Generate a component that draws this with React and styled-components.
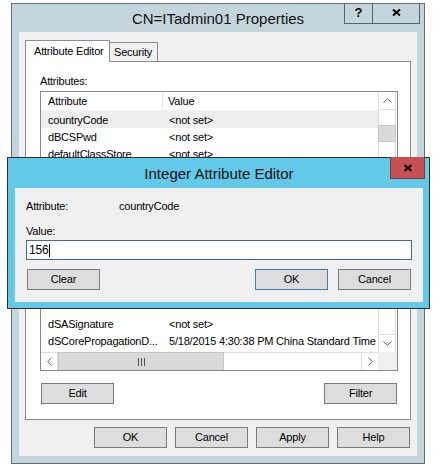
import React from 'react';
import styled, { createGlobalStyle } from 'styled-components';

// rows 3..11 sit under the Integer Attribute Editor and are not visible
const rows = [
  { name: 'countryCode', value: '<not set>', selected: true },
  { name: 'dBCSPwd', value: '<not set>' },
  { name: 'defaultClassStore', value: '<not set>' },
  ...Array.from({ length: 9 }, () => ({ name: '', value: '' })),
  { name: 'dSASignature', value: '<not set>' },
  { name: 'dSCorePropagationD...', value: '5/18/2015 4:30:38 PM China Standard Time' },
];

const App = () => {
  return (
    <>
      <GlobalStyle />
      <Desktop>
        <Window>
          <TitleBar>CN=ITadmin01 Properties</TitleBar>
          <CaptionButtons>
            <CaptionButton $w={29}>?</CaptionButton>
            <CaptionButton $w={48}>
              <svg width="9" height="7" viewBox="0 0 9 7">
                <path d="M1 0.5 L8 6.5 M8 0.5 L1 6.5" stroke="#000" strokeWidth="2" />
              </svg>
            </CaptionButton>
          </CaptionButtons>

          <Client>
            <TabStrip>
              <Tab $active $w={85} $pad={8}>Attribute Editor</Tab>
              <Tab $w={48} $pad={4}>Security</Tab>
            </TabStrip>

            <TabPanel>
              <Label>Attributes:</Label>
              <ListBox>
                <ListView>
                  <HeaderRow>
                    <HeaderCell $first>Attribute</HeaderCell>
                    <HeaderCell>Value</HeaderCell>
                  </HeaderRow>
                  {rows.map((r, i) => (
                    <Row key={i} $selected={r.selected}>
                      <Cell $first>{r.name}</Cell>
                      <Cell>{r.value}</Cell>
                    </Row>
                  ))}
                </ListView>

                <VScroll>
                  <ArrowBox $edge="bottom">
                    <svg width="9" height="5" viewBox="0 0 9 5">
                      <path d="M0.5 4.5 L4.5 0.8 L8.5 4.5" fill="none" stroke="#606060" />
                    </svg>
                  </ArrowBox>
                  <VThumb />
                  <Spacer />
                  <ArrowBox $edge="top">
                    <svg width="9" height="5" viewBox="0 0 9 5">
                      <path d="M0.5 0.5 L4.5 4.2 L8.5 0.5" fill="none" stroke="#606060" />
                    </svg>
                  </ArrowBox>
                </VScroll>

                <HScroll>
                  <HArrow $edge="right">
                    <svg width="5" height="9" viewBox="0 0 5 9">
                      <path d="M4.5 0.5 L0.8 4.5 L4.5 8.5" fill="none" stroke="#606060" />
                    </svg>
                  </HArrow>
                  <HThumb>
                    <svg width="9" height="8" viewBox="0 0 9 8">
                      <path d="M1.5 0 V8 M4.5 0 V8 M7.5 0 V8" stroke="#505050" />
                    </svg>
                  </HThumb>
                  <Spacer />
                  <HArrow $edge="left">
                    <svg width="5" height="9" viewBox="0 0 5 9">
                      <path d="M0.5 0.5 L4.2 4.5 L0.5 8.5" fill="none" stroke="#606060" />
                    </svg>
                  </HArrow>
                </HScroll>
                <Corner />
              </ListBox>

              <PanelButtons>
                <Button>Edit</Button>
                <Button>Filter</Button>
              </PanelButtons>
            </TabPanel>

            <FooterButtons>
              <Button>OK</Button>
              <Button>Cancel</Button>
              <Button>Apply</Button>
              <Button>Help</Button>
            </FooterButtons>
          </Client>
        </Window>

        <Dialog>
          <DialogTitle>Integer Attribute Editor</DialogTitle>
          <CloseButton>
            <svg width="10" height="8" viewBox="0 0 10 8">
              <path d="M1.5 1 L8.5 7 M8.5 1 L1.5 7" stroke="#000" strokeWidth="2.2" />
            </svg>
          </CloseButton>
          <DialogClient>
            <InfoRow>
              <span>Attribute:</span>
              <span>countryCode</span>
            </InfoRow>
            <ValueLabel>Value:</ValueLabel>
            <Input>
              156
              <Caret />
            </Input>
            <DialogButtons>
              <Button>Clear</Button>
              <Spacer />
              <Button $default>OK</Button>
              <Button>Cancel</Button>
            </DialogButtons>
          </DialogClient>
        </Dialog>
      </Desktop>
    </>
  );
};

export default App;

const GlobalStyle = createGlobalStyle`
  html, body {
    margin: 0;
    padding: 0;
    background: #ffffff;
  }
  body {
    font-family: "Liberation Sans", Arial, sans-serif;
    font-size: 11px;
    letter-spacing: -0.2px;
    color: #000;
  }
  * {
    box-sizing: border-box;
  }
`;

const Desktop = styled.div`
  position: relative;
  width: 441px;
  height: 473px;
  padding: 3px 0 0 11px;
  overflow: hidden;
`;

const Window = styled.div`
  position: relative;
  width: 414px;
  height: 461px;
  border: 1px solid #646f78;
  background: #c4d5dc;
  display: flex;
  flex-direction: column;
  padding: 0 7px 7px 7px;
`;

const TitleBar = styled.div`
  height: 28px;
  display: flex;
  align-items: center;
  justify-content: center;
  padding-top: 1px;
  font-size: 15px;
  letter-spacing: 0;
  color: #111;
`;

const CaptionButtons = styled.div`
  position: absolute;
  top: -1px;
  right: 4px;
  display: flex;
`;

const CaptionButton = styled.div`
  width: ${(p) => p.$w}px;
  height: 21px;
  border: 1px solid #59636b;
  border-top: none;
  display: flex;
  align-items: center;
  justify-content: center;
  font-size: 13px;
  font-weight: bold;
  letter-spacing: 0;
  padding-bottom: 2px;

  & + & {
    margin-left: -1px;
  }
`;

const Client = styled.div`
  flex: 1;
  background: #f0f0f0;
  padding: 8px 7px 8px 6px;
  display: flex;
  flex-direction: column;
`;

const TabStrip = styled.div`
  position: relative;
  z-index: 1;
  height: 22px;
  margin-bottom: -1px;
  display: flex;
  align-items: flex-end;
`;

const Tab = styled.div`
  width: ${(p) => p.$w}px;
  height: ${(p) => (p.$active ? 22 : 20)}px;
  padding-left: ${(p) => p.$pad}px;
  border: 1px solid #898c95;
  border-bottom: ${(p) => (p.$active ? 'none' : '1px solid #898c95')};
  border-left: ${(p) => (p.$active ? '1px solid #898c95' : 'none')};
  background: ${(p) => (p.$active ? '#ffffff' : '#f0f0f0')};
  display: flex;
  align-items: center;
  padding-bottom: 1px;
`;

const TabPanel = styled.div`
  width: 386px;
  height: 359px;
  border: 1px solid #898c95;
  background: #ffffff;
  padding: 12px 12px 15px 14px;
  display: flex;
  flex-direction: column;
`;

const Label = styled.div`
  line-height: 14px;
  height: 14px;
  margin-bottom: 3px;
`;

const ListBox = styled.div`
  height: 280px;
  border: 1px solid #828790;
  display: grid;
  grid-template-columns: 1fr 19px;
  grid-template-rows: 1fr 18px;
  overflow: hidden;
`;

const ListView = styled.div`
  overflow: hidden;
`;

const HeaderRow = styled.div`
  height: 19px;
  display: grid;
  grid-template-columns: 122px 1fr;
  border-bottom: 1px solid #f2f2f2;
`;

const HeaderCell = styled.div`
  display: flex;
  align-items: center;
  padding-left: ${(p) => (p.$first ? 7 : 5)}px;
  border-right: ${(p) => (p.$first ? '1px solid #e5e5e5' : 'none')};
  white-space: nowrap;
`;

const Row = styled.div`
  height: 17px;
  display: grid;
  grid-template-columns: 122px 1fr;
  background: ${(p) => (p.$selected ? '#eeeeee' : 'transparent')};
  white-space: nowrap;
  overflow: hidden;
`;

const Cell = styled.div`
  display: flex;
  align-items: center;
  padding-left: ${(p) => (p.$first ? 7 : 6)}px;
  overflow: hidden;
`;

const VScroll = styled.div`
  grid-row: 1;
  grid-column: 2;
  display: flex;
  flex-direction: column;
  border-left: 1px solid #dcdcdc;
  border-right: 1px solid #dcdcdc;
  margin-right: 1px;
  background: #ffffff;
`;

const ArrowBox = styled.div`
  height: 18px;
  display: flex;
  align-items: center;
  justify-content: center;
  border-${(p) => p.$edge}: 1px solid #dcdcdc;
`;

const VThumb = styled.div`
  height: 17px;
  margin: 15px -1px 0;
  background: #dadada;
  border: 1px solid #c6c6c6;
`;

const Spacer = styled.div`
  flex: 1;
`;

const HScroll = styled.div`
  grid-row: 2;
  grid-column: 1;
  display: flex;
  border-top: 1px solid #dcdcdc;
  background: #ffffff;
`;

const HArrow = styled.div`
  width: 17px;
  display: flex;
  align-items: center;
  justify-content: center;
  border-${(p) => p.$edge}: 1px solid #dcdcdc;
`;

const HThumb = styled.div`
  width: 166px;
  margin: -1px 0;
  background: #dadada;
  border: 1px solid #c6c6c6;
  display: flex;
  align-items: center;
  justify-content: center;
`;

const Corner = styled.div`
  grid-row: 2;
  grid-column: 2;
  background: #f0f0f0;
`;

const PanelButtons = styled.div`
  margin-top: 12px;
  padding: 0 1px;
  display: flex;
  justify-content: space-between;
`;

const Button = styled.div`
  width: 73px;
  height: 21px;
  background: #dddddd;
  border: 1px solid ${(p) => (p.$default ? '#3c7fb1' : '#7a7a7a')};
  display: flex;
  align-items: center;
  justify-content: center;
  padding-bottom: 1px;
`;

const FooterButtons = styled.div`
  margin-top: 7px;
  display: flex;
  justify-content: flex-end;
  gap: 8px;
`;

const Dialog = styled.div`
  position: absolute;
  left: 7px;
  top: 157px;
  width: 423px;
  height: 152px;
  border: 1px solid #2e2e2e;
  background: #62c9e9;
  padding: 0 6px 6px 7px;
  display: flex;
  flex-direction: column;
`;

const DialogTitle = styled.div`
  height: 30px;
  display: flex;
  align-items: center;
  justify-content: center;
  font-size: 15px;
  letter-spacing: 0;
  color: #111;
`;

const CloseButton = styled.div`
  position: absolute;
  top: -1px;
  right: 4px;
  width: 35px;
  height: 22px;
  background: #c75050;
  border: 1px solid #7d3a3a;
  border-top: none;
  display: flex;
  align-items: center;
  justify-content: center;
`;

const DialogClient = styled.div`
  flex: 1;
  background: #f0f0f0;
  padding: 12px 11px 0 11px;
  display: flex;
  flex-direction: column;
`;

const InfoRow = styled.div`
  height: 13px;
  line-height: 13px;
  display: grid;
  grid-template-columns: 93px 1fr;
`;

const ValueLabel = styled.div`
  margin-top: 12px;
  height: 13px;
  line-height: 13px;
`;

const Input = styled.div`
  margin-top: 2px;
  height: 20px;
  background: #ffffff;
  border: 1px solid #3b6e9f;
  padding: 0 2px;
  display: flex;
  align-items: center;
  font-size: 12px;
`;

const Caret = styled.span`
  display: inline-block;
  width: 1px;
  height: 13px;
  background: #000;
  margin-left: 1px;
`;

const DialogButtons = styled.div`
  margin-top: 9px;
  padding: 0 1px;
  display: flex;
  gap: 10px;
`;
